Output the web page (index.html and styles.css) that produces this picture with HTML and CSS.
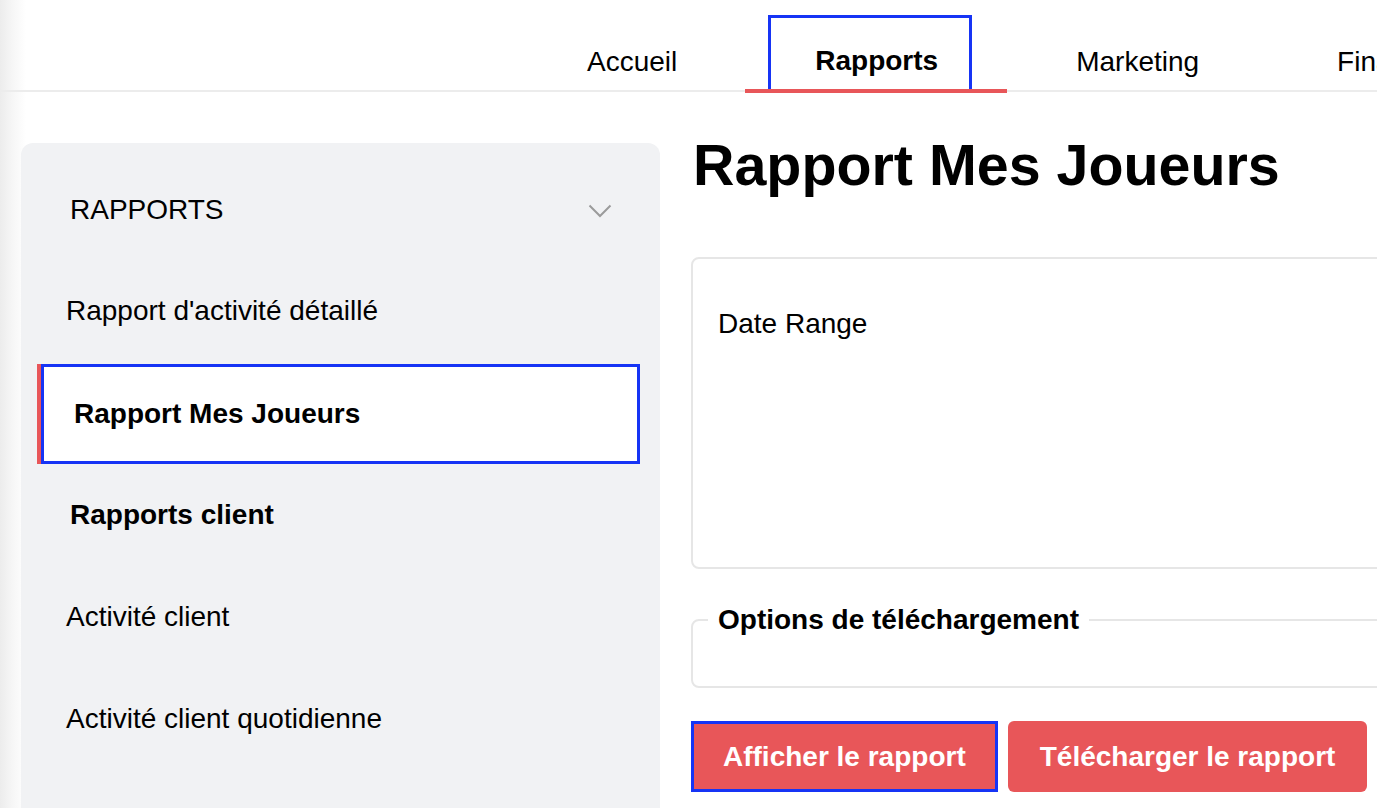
FILE: index.html
```html
<!DOCTYPE html>
<html lang="fr">
<head>
<meta charset="utf-8">
<title>Rapport Mes Joueurs</title>
<link rel="stylesheet" href="styles.css">
</head>
<body>
<header class="topbar">
  <nav class="tabs">
    <a class="tab">Accueil</a>
    <a class="tab active"><span class="tab-label hl">Rapports</span></a>
    <a class="tab">Marketing</a>
    <a class="tab">Finances</a>
  </nav>
</header>
<div class="layout">
  <aside class="sidebar">
    <div class="side-head">
      <span>RAPPORTS</span>
      <svg class="chev" width="24" height="14" viewBox="0 0 24 14"><polyline points="1.5,1.5 12,12 22.5,1.5" fill="none" stroke="#9b9b9b" stroke-width="2"/></svg>
    </div>
    <div class="side-item">Rapport d'activité détaillé</div>
    <div class="side-item selected">Rapport Mes Joueurs</div>
    <div class="side-group">Rapports client</div>
    <div class="side-item">Activité client</div>
    <div class="side-item">Activité client quotidienne</div>
  </aside>
  <main class="main">
    <h1 class="title">Rapport Mes Joueurs</h1>
    <section class="card">
      <div class="card-label">Date Range</div>
    </section>
    <fieldset class="options">
      <legend>Options de téléchargement</legend>
    </fieldset>
    <div class="actions">
      <button class="btn hl-btn">Afficher le rapport</button>
      <button class="btn">Télécharger le rapport</button>
    </div>
  </main>
</div>
</body>
</html>
```

FILE: styles.css
```css
* { box-sizing: border-box; }
html, body { margin: 0; padding: 0; }
body {
  width: 1377px;
  height: 808px;
  overflow: hidden;
  font-family: "Liberation Sans", Arial, sans-serif;
  color: #000;
  background: linear-gradient(to right, #ececec 0, #f6f6f6 12px, #fff 26px);
}
.topbar {
  height: 92px;
  border-bottom: 2px solid #ececec;
}
.tabs {
  display: flex;
  margin-left: 518px;
  height: 90px;
  white-space: nowrap;
}
.tab {
  position: relative;
  display: block;
  padding: 46px 69px 0;
  height: 90px;
  font-size: 28px;
  line-height: 32px;
}
.tab.active { font-weight: bold; padding: 15px 35px 0 22px; }
.tab.active::after {
  content: "";
  position: absolute;
  left: -1px;
  right: 0;
  bottom: -3px;
  height: 4px;
  background: #e85659;
}
.tab-label { display: block; padding: 30px 34px 0 47px; height: 77px; }
.hl { outline: 3px solid #1634f5; outline-offset: -3px; }
.layout {
  display: flex;
  gap: 31px;
  padding-left: 21px;
}
.sidebar {
  flex: none;
  width: 639px;
  margin-top: 51px;
  padding: 16px 20px 60px 16px;
  background: #f1f2f4;
  border-radius: 12px 12px 0 0;
  font-size: 28px;
  line-height: 32px;
}
.side-head {
  height: 101px;
  display: flex;
  align-items: center;
  justify-content: space-between;
  padding: 0 28px 0 33px;
}
.chev { display: block; margin-top: 2px; }
.side-item, .side-group {
  height: 102px;
  display: flex;
  align-items: center;
  padding-left: 29px;
}
.side-group { font-weight: bold; padding-left: 33px; }
.side-item.selected {
  background: #fff;
  font-weight: bold;
  border-left: 4px solid #e85659;
  padding-left: 33px;
  height: 100px;
  margin: 2px 0 0;
  box-shadow: inset 0 0 0 3px #1634f5;
}
.main {
  flex: none;
  width: 900px;
  display: flex;
  flex-direction: column;
}
.title {
  margin: 41px 0 0 2px;
  font-size: 57.4px;
  line-height: 64px;
  font-weight: bold;
}
.card {
  margin-top: 60px;
  height: 312px;
  border: 2px solid #e6e6e6;
  border-radius: 8px;
  padding: 49px 25px 0;
  font-size: 28px;
  line-height: 32px;
}
.options {
  margin: 35px 0 0;
  padding: 0 15px 0;
  height: 84px;
  border: 2px solid #e6e6e6;
  border-radius: 8px;
}
.options legend {
  padding: 0 10px;
  font-size: 28px;
  line-height: 32px;
  font-weight: bold;
}
.actions {
  display: flex;
  gap: 10px;
  margin-top: 33px;
}
.btn {
  height: 71px;
  padding: 0 32px;
  border: none;
  border-radius: 6px;
  background: #e85659;
  color: #fff;
  font-family: "Liberation Sans", Arial, sans-serif;
  font-size: 28px;
  font-weight: bold;
  white-space: nowrap;
}
.hl-btn { border-radius: 0; outline: 3px solid #1634f5; outline-offset: -3px; }
```
